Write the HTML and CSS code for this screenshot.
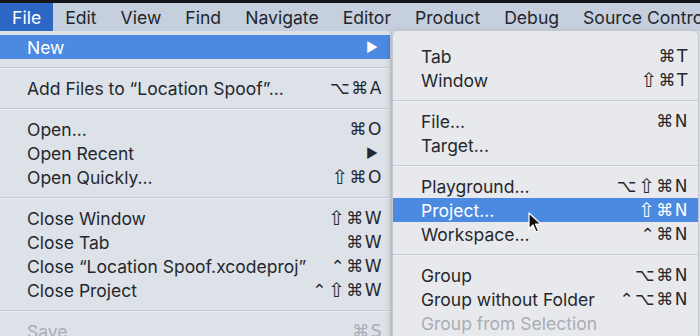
FILE: index.html
```html
<!DOCTYPE html>
<html lang="en">
<head>
    <meta charset="UTF-8">
    <title>Xcode File Menu</title>
    <link rel="stylesheet" href="styles.css">
</head>
<body>
    <div class="screen">
        <div class="topstrip"></div>

        <nav class="menubar">
            <span class="item open">File</span>
            <span class="item">Edit</span>
            <span class="item">View</span>
            <span class="item">Find</span>
            <span class="item">Navigate</span>
            <span class="item">Editor</span>
            <span class="item">Product</span>
            <span class="item">Debug</span>
            <span class="item">Source Control</span>
        </nav>

        <div class="menu file-menu">
            <div class="row active"><span>New</span><span class="arrow">▶</span></div>
            <div class="sep"></div>
            <div class="row"><span>Add Files to “Location Spoof”...</span><span class="key">⌥⌘A</span></div>
            <div class="sep"></div>
            <div class="row"><span>Open...</span><span class="key">⌘O</span></div>
            <div class="row"><span>Open Recent</span><span class="arrow">▶</span></div>
            <div class="row"><span>Open Quickly...</span><span class="key"><span class="shift">⇧</span>⌘O</span></div>
            <div class="sep"></div>
            <div class="row"><span>Close Window</span><span class="key"><span class="shift">⇧</span>⌘W</span></div>
            <div class="row"><span>Close Tab</span><span class="key">⌘W</span></div>
            <div class="row"><span>Close “Location Spoof.xcodeproj”</span><span class="key">⌃⌘W</span></div>
            <div class="row"><span>Close Project</span><span class="key">⌃<span class="shift">⇧</span>⌘W</span></div>
            <div class="sep"></div>
            <div class="row disabled"><span>Save</span><span class="key">⌘S</span></div>
        </div>

        <div class="menu submenu">
            <div class="row"><span>Tab</span><span class="key">⌘T</span></div>
            <div class="row"><span>Window</span><span class="key"><span class="shift">⇧</span>⌘T</span></div>
            <div class="sep"></div>
            <div class="row"><span>File...</span><span class="key">⌘N</span></div>
            <div class="row"><span>Target...</span></div>
            <div class="sep"></div>
            <div class="row"><span>Playground...</span><span class="key">⌥<span class="shift">⇧</span>⌘N</span></div>
            <div class="row active"><span>Project...</span><span class="key"><span class="shift">⇧</span>⌘N</span></div>
            <div class="row"><span>Workspace...</span><span class="key">⌃⌘N</span></div>
            <div class="sep"></div>
            <div class="row"><span>Group</span><span class="key">⌥⌘N</span></div>
            <div class="row"><span>Group without Folder</span><span class="key">⌃⌥⌘N</span></div>
            <div class="row disabled"><span>Group from Selection</span></div>
        </div>

        <svg class="cursor" width="14" height="22" viewBox="0 0 14 22">
            <path d="M1 1 L1 17 L5 13 L8 20 L10.5 19 L7.5 12 L13 12 Z" fill="#111" stroke="#fff" stroke-width="1.2" stroke-linejoin="round"/>
        </svg>
    </div>
</body>
</html>
```

FILE: styles.css
```css
body { margin: 0; background: #1a1a1a; font-family: Inter, "Liberation Sans", "DejaVu Sans", sans-serif; }
.screen { position: relative; width: 700px; height: 336px; overflow: hidden; background: #dde1e8; }
.topstrip { height: 3px; background: #141518; }
.menubar { display: flex; height: 28px; align-items: center; background: #c6cfdd; color: #23262c; font-size: 17.6px; white-space: nowrap; }
.menubar .item { flex-shrink: 0; height: 100%; display: flex; align-items: center; padding: 0 12px; }
.menubar .item.open { background: #2d67c6; color: #fff; }

.menu { color: #25282e; font-size: 17.5px; white-space: nowrap; }
.menu .row { display: flex; justify-content: space-between; align-items: center; height: 24px; }
.menu .row.active { background: #4c8ae1; color: #fff; }
.menu .row.disabled { color: #a9adb5; }
.menu .key { display: flex; align-items: center; font-family: "DejaVu Sans", sans-serif; font-size: 17px; letter-spacing: 1.5px; }
.menu .shift { font-size: 20px; line-height: 1; margin-top: -1px; }
.menu .arrow { font-size: 13px; margin-right: 5px; }
.menu .sep { height: 17px; display: flex; align-items: center; }
.menu .sep::after { content: ""; flex: 1; height: 1px; background: #c6cad2; border-bottom: 1px solid #eceef2; }

.file-menu { width: 390px; padding-top: 4px; border-right: 2px solid #cfd3da; }
.file-menu .row { padding: 0 7px 0 27px; }

.submenu { position: absolute; left: 392px; top: 30px; width: 305px; height: 320px; padding-top: 13px; background: #e8e9ec; border: 1px solid #c4c7cd; border-radius: 6px 6px 0 0; box-shadow: -2px 2px 6px rgba(0, 0, 0, 0.15); }
.submenu .row { padding: 0 9px 0 28px; }

.cursor { position: absolute; left: 528px; top: 212px; }
```
